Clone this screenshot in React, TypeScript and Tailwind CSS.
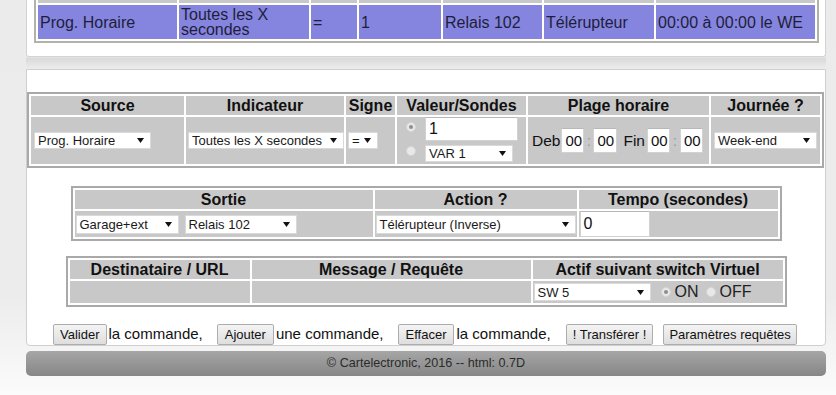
import React from "react";

const Arrow = () => (
  <svg width="7" height="5" viewBox="0 0 7 5" className="shrink-0">
    <path d="M0 0h7L3.5 5z" fill="#111" />
  </svg>
);

type BoxProps = { text: string; className: string };

// fake select, looks like the old chrome one
const Sel = ({ text, className }: BoxProps) => (
  <div
    className={`flex items-center justify-between bg-white border border-[#d9d9d9] pl-[3px] pr-[6px] text-[13px] leading-none text-[#1a1a1a] whitespace-nowrap overflow-hidden ${className}`}
  >
    <span>{text}</span>
    <Arrow />
  </div>
);

const Field = ({ text, className }: BoxProps) => (
  <div
    className={`flex items-center bg-white border border-[#d2d2d2] border-t-[#b8b8b8] pl-[3px] text-[15px] leading-none text-[#111] ${className}`}
  >
    {text}
  </div>
);

const Radio = ({ checked, className = "" }: { checked?: boolean; className?: string }) => (
  <span
    className={`flex items-center justify-center w-[10px] h-[10px] rounded-full bg-[#e8e8e8] border border-[#d6d6d6] shrink-0 ${className}`}
  >
    {checked && <span className="w-[4px] h-[4px] rounded-full bg-[#8e8e8e]" />}
  </span>
);

const Th = ({ children }: { children: React.ReactNode }) => (
  <div className="bg-[#c8c8c8] h-[19px] flex items-center justify-center font-bold text-[16px] text-[#111] whitespace-nowrap">
    {children}
  </div>
);

const Btn = ({ children, className = "" }: { children: React.ReactNode; className?: string }) => (
  <span
    className={`inline-flex items-center h-[21px] border border-[#adadad] rounded-[2px] bg-linear-to-b from-[#f4f4f4] to-[#dedede] text-[13px] text-[#111] whitespace-nowrap ${className}`}
  >
    {children}
  </span>
);

const topRow = [
  "Prog. Horaire",
  "Toutes les X secondes",
  "=",
  "1",
  "Relais 102",
  "Télérupteur",
  "00:00 à 00:00 le WE",
];

const App = () => {
  return (
    <div className="w-[836px] h-[395px] overflow-hidden flex bg-linear-to-b from-[#ebebeb] via-[#ececec] via-75% to-[#fbfbfb] font-['Liberation_Sans',Arial,sans-serif] text-[#111]">
      <div className="w-[26px] shrink-0" />

      <div className="w-[800px] shrink-0 flex flex-col">
        {/* previous panel, list of commands */}
        <div className="h-[57px] bg-white border-x border-b border-[#d3d3d3] rounded-b-[3px] overflow-hidden pl-[7px]">
          <div className="-mt-[21px] w-[785px] grid grid-cols-[139px_130px_46px_82px_99px_110px_159px] gap-[2px] p-[2px] border-2 border-[#b2b2a8] bg-white">
            {topRow.map((_, i) => (
              <div key={"h" + i} className="h-[20px] bg-[#c8c8c8]" />
            ))}
            {topRow.map((t, i) => (
              <div
                key={i}
                className="h-[34px] bg-[#8585e0] flex items-center pl-[2px] text-[16px] leading-[15px] text-[#1e1e3a] whitespace-pre-line overflow-hidden"
              >
                {i === 1 ? "Toutes les X\nsecondes" : t}
              </div>
            ))}
          </div>
        </div>

        <div className="h-[12px] bg-linear-to-b from-[#d9d9d9] to-[#ededed] border-t border-[#e4e4e4]" />

        {/* command editor */}
        <div className="h-[277px] bg-white border border-[#cfcfcf] rounded-b-[4px] flex flex-col">
          <div className="mt-[22px] w-[797px] grid grid-cols-[153px_158px_49px_129px_181px_109px] gap-[2px] p-[2px] border-2 border-[#a9a9a9] bg-white">
            <Th>Source</Th>
            <Th>Indicateur</Th>
            <Th>Signe</Th>
            <Th>Valeur/Sondes</Th>
            <Th>Plage horaire</Th>
            <Th>Journée ?</Th>

            <div className="h-[47px] bg-[#c8c8c8] flex items-center pl-[3px]">
              <Sel text="Prog. Horaire" className="w-[117px] h-[17px]" />
            </div>
            <div className="h-[47px] bg-[#c8c8c8] flex items-center pl-[2px]">
              <Sel text="Toutes les X secondes" className="w-[156px] h-[17px]" />
            </div>
            <div className="h-[47px] bg-[#c8c8c8] flex items-center pl-[2px]">
              <Sel text="=" className="w-[30px] h-[17px] pr-[4px]" />
            </div>
            <div className="h-[47px] bg-[#c8c8c8] flex pl-[9px]">
              <div className="flex flex-col">
                <Radio checked className="mt-[5px]" />
                <Radio className="mt-[14px]" />
              </div>
              <div className="flex flex-col ml-[9px]">
                <Field text="1" className="w-[93px] h-[24px] text-[16px]" />
                <Sel text="VAR 1" className="w-[88px] h-[17px] mt-[4px]" />
              </div>
            </div>
            <div className="h-[47px] bg-[#c8c8c8] flex items-center pl-[4px] text-[15.5px]">
              <span>Deb</span>
              <Field text="00" className="w-[23px] h-[25px] ml-[1px] pl-[2px]" />
              <span className="w-[9px] text-center text-[#9a9a9a]">:</span>
              <Field text="00" className="w-[24px] h-[25px] pl-[3px]" />
              <span className="ml-[6px]">Fin</span>
              <Field text="00" className="w-[23px] h-[25px] ml-[2px] pl-[2px]" />
              <span className="w-[10px] text-center text-[#9a9a9a]">:</span>
              <Field text="00" className="w-[23px] h-[25px] pl-[2px]" />
            </div>
            <div className="h-[47px] bg-[#c8c8c8] flex items-center pl-[3px]">
              <Sel text="Week-end" className="w-[103px] h-[17px]" />
            </div>
          </div>

          <div className="mt-[18px] mx-auto w-[711px] grid grid-cols-[298px_202px_199px] gap-[2px] p-[2px] border-2 border-[#a9a9a9] bg-white">
            <Th>Sortie</Th>
            <Th>Action ?</Th>
            <Th>Tempo (secondes)</Th>
            <div className="h-[26px] bg-[#c8c8c8] flex items-center pl-[1px] gap-[6px]">
              <Sel text="Garage+ext" className="w-[103px] h-[19px]" />
              <Sel text="Relais 102" className="w-[112px] h-[19px]" />
            </div>
            <div className="h-[26px] bg-[#c8c8c8] flex items-center pl-[1px]">
              <Sel text="Télérupteur (Inverse)" className="w-[200px] h-[19px]" />
            </div>
            <div className="h-[26px] bg-[#c8c8c8] flex items-center pl-[1px]">
              <Field text="0" className="w-[70px] h-[26px] pl-[2px] text-[16px]" />
            </div>
          </div>

          <div className="mt-[15px] mx-auto w-[721px] grid grid-cols-[180px_279px_250px] gap-[2px] p-[2px] border-2 border-[#a9a9a9] bg-white">
            <Th>Destinataire / URL</Th>
            <Th>Message / Requête</Th>
            <Th>Actif suivant switch Virtuel</Th>
            <div className="h-[22px] bg-[#c8c8c8]" />
            <div className="h-[22px] bg-[#c8c8c8]" />
            <div className="h-[22px] bg-[#c8c8c8] flex items-center pl-[1px] text-[16px] text-[#222]">
              <Sel text="SW 5" className="w-[117px] h-[18px]" />
              <Radio checked className="ml-[10px]" />
              <span className="ml-[4px]">ON</span>
              <Radio className="ml-[7px]" />
              <span className="ml-[4px]">OFF</span>
            </div>
          </div>

          <div className="mt-[16px] flex items-center pl-[26px] text-[15px] text-[#111]">
            <Btn className="px-[6px]">Valider</Btn>
            <span className="ml-[2px]">la commande,</span>
            <Btn className="ml-[14px] px-[7px]">Ajouter</Btn>
            <span className="ml-[2px]">une commande,</span>
            <Btn className="ml-[14px] px-[7px]">Effacer</Btn>
            <span className="ml-[2px]">la commande,</span>
            <Btn className="ml-[15px] px-[6px]">! Transférer !</Btn>
            <Btn className="ml-[10px] px-[5px]">Paramètres requêtes</Btn>
          </div>
        </div>

        <div className="mt-[5px] h-[25px] rounded-[5px] bg-linear-to-b from-[#a6a6a6] to-[#868686] flex items-center justify-center text-[12.6px] text-[#2b2b2b]">
          © Cartelectronic, 2016 -- html: 0.7D
        </div>
      </div>

      <div className="flex-1" />
    </div>
  );
};

export default App;
